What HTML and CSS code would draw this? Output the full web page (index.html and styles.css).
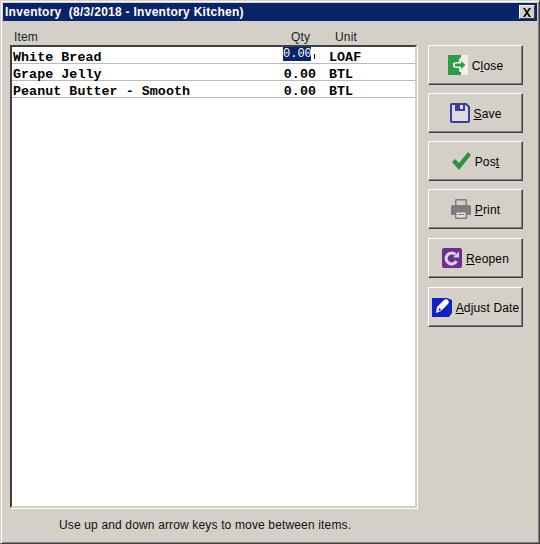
FILE: index.html
```html
<!DOCTYPE html>
<html>
<head>
<meta charset="utf-8">
<title>Inventory</title>
<link rel="stylesheet" href="styles.css">
</head>
<body>
<div class="window">
  <div class="titlebar">
    <span class="title">Inventory&nbsp; (8/3/2018 - Inventory Kitchen)</span>
    <span class="x_btn"><svg width="10" height="9" viewBox="0 0 10 9"><path d="M1 0h2l2 3 2-3h2L6 4.500 9 9H7L5 6 3 9H1l3-4.500z" fill="#000"/></svg></span>
  </div>
  <div class="content">
    <div class="left">
      <div class="heads">
        <span class="h_item">Item</span>
        <span class="h_qty">Qty</span>
        <span class="h_unit">Unit</span>
      </div>
      <div class="list">
        <div class="row">
          <span class="c_item">White Bread</span>
          <span class="c_qty"><span class="qty_sel">0.00</span><i class="tick"></i></span>
          <span class="c_unit">LOAF</span>
        </div>
        <div class="row">
          <span class="c_item">Grape Jelly</span>
          <span class="c_qty">0.00</span>
          <span class="c_unit">BTL</span>
        </div>
        <div class="row">
          <span class="c_item">Peanut Butter - Smooth</span>
          <span class="c_qty">0.00</span>
          <span class="c_unit">BTL</span>
        </div>
      </div>
      <div class="hint">Use up and down arrow keys to move between items.</div>
    </div>
    <div class="buttons">
      <div class="btn">
        <svg width="20" height="20" viewBox="0 0 20 20"><path d="M0 0h20v20H0z" fill="#eef0ea"/><path d="M0 0h13v3h-1v14h1v3H0z" fill="#2e9a48"/><path d="M5 8l3-1h3V3l9 7-9 7v-4H8l-3-1z" fill="#eef0ea"/><path d="M7 8.500h6V6l4.500 4-4.500 4v-2.500H7z" fill="#2e9a48"/></svg>
        <span>C<u>l</u>ose</span>
      </div>
      <div class="btn">
        <svg width="20" height="20" viewBox="0 0 20 20"><path d="M2 1h14l3 3v14a1 1 0 0 1-1 1H2a1 1 0 0 1-1-1V2a1 1 0 0 1 1-1z" fill="#dcdbe0" stroke="#3b3f99" stroke-width="2"/><path d="M5 1h10v7H5z" fill="#3b3f99"/><path d="M10 2h3v4h-3z" fill="#dcdbe0"/></svg>
        <span><u>S</u>ave</span>
      </div>
      <div class="btn">
        <svg width="19" height="18" viewBox="0 0 19 18"><path d="M0 10l3-3 4 4L16 0l3 3L7 18z" fill="#2b9148"/></svg>
        <span>Pos<u>t</u></span>
      </div>
      <div class="btn">
        <svg width="20" height="20" viewBox="0 0 20 20"><path d="M4 1a1 1 0 0 1 1-1h10a1 1 0 0 1 1 1v6H4z" fill="#7d7d7d"/><path d="M5.500 1.500h9V6h-9z" fill="#d4d0c8"/><path d="M2 6h16a2 2 0 0 1 2 2v7a1 1 0 0 1-1 1h-3v-3H4v3H1a1 1 0 0 1-1-1V8a2 2 0 0 1 2-2z" fill="#7d7d7d"/><path d="M4 12h12v8H4z" fill="#7d7d7d"/><path d="M5.500 13.500h9v5h-9z" fill="#e4e2dc"/><path d="M7 15h6v1H7z" fill="#7d7d7d"/></svg>
        <span><u>P</u>rint</span>
      </div>
      <div class="btn">
        <svg width="20" height="20" viewBox="0 0 20 20"><rect width="20" height="20" rx="2" fill="#6b2f8f"/><path d="M14.500 13A5.500 5.500 0 1 1 13.500 6.500" fill="none" stroke="#dcd4e4" stroke-width="3"/><path d="M11 9.500h6v-6z" fill="#dcd4e4"/></svg>
        <span><u>R</u>eopen</span>
      </div>
      <div class="btn">
        <svg width="20" height="20" viewBox="0 0 20 20"><path d="M1 1h14l5 2v13l-3 4H0V1z" fill="#1420c0"/><path d="M4 16l1-6 7-7c1-1 3-1 4 0s1 3 0 4l-7 7z" fill="#fff"/><path d="M6.500 14l.5-3 2.500 2z" fill="#1420c0"/></svg>
        <span><u>A</u>djust Date</span>
      </div>
    </div>
  </div>
</div>
</body>
</html>
```
FILE: styles.css
```css
html, body { margin: 0; padding: 0; }
body { width: 540px; height: 544px; background: #d4d0c8; font: 12px "Liberation Sans", Arial, sans-serif; color: #000; overflow: hidden; }

.window { width: 540px; height: 544px; box-sizing: border-box; padding: 2px; background: #d4d0c8; border: 1px solid; border-color: #d4d0c8 #404040 #404040 #d4d0c8; box-shadow: inset 1px 1px 0 #fff, inset -1px -1px 0 #808080; display: flex; flex-direction: column; }

.titlebar { height: 18px; background: #0a246a; display: flex; align-items: center; justify-content: space-between; padding: 0 2px; flex: none; }
.title { color: #fff; font-weight: bold; font-size: 12px; letter-spacing: 0.28px; }
.x_btn { width: 16px; height: 14px; box-sizing: border-box; background: #d4d0c8; border: 1px solid; border-color: #fff #404040 #404040 #fff; display: flex; align-items: center; justify-content: center; }
.x_btn svg { display: block; }

.content { display: flex; flex: 1; padding: 0 0 0 7px; letter-spacing: 0.15px; }
.left { width: 407px; display: flex; flex-direction: column; }

.heads { height: 24px; display: flex; align-items: flex-end; padding-bottom: 1px; box-sizing: border-box; color: #222; }
.h_item { width: 277px; padding-left: 4px; box-sizing: border-box; }
.h_qty { width: 46px; padding-left: 4px; box-sizing: border-box; }
.h_unit { width: 40px; padding-left: 2px; }

.list { height: 463px; box-sizing: border-box; background: #fff; border: 2px solid; border-color: #404040 #d4d0c8 #d4d0c8 #404040; box-shadow: 1px 1px 0 #fff; }
.row { height: 17px; box-sizing: border-box; border-bottom: 1px solid #bbb; display: flex; font: bold 13.33px/21px "Liberation Mono", "Courier New", monospace; letter-spacing: 0.05px; }
.c_item { width: 261px; padding-left: 1px; box-sizing: border-box; }
.c_qty { width: 56px; text-align: right; padding-right: 13px; box-sizing: border-box; position: relative; }
.c_unit { width: 80px; }

.qty_sel { position: absolute; left: 10px; top: 0; width: 28px; height: 14px; background: #0a246a; color: #fff; font: 12px/14px "Liberation Mono", monospace; letter-spacing: 0; text-align: center; }
.tick { position: absolute; left: 41px; top: 7px; width: 1px; height: 5px; background: #000; }

.hint { padding: 10px 0 0 49px; color: #111; }

.buttons { margin-left: 11px; width: 95px; padding-top: 24px; display: flex; flex-direction: column; }
.btn { width: 95px; height: 40px; box-sizing: border-box; margin-bottom: 8px; padding-top: 1px; border: 1px solid; border-color: #fff #404040 #404040 #fff; box-shadow: inset -1px -1px 0 #808080; display: flex; align-items: center; justify-content: center; gap: 4px; }
.btn:nth-child(n+4) { margin-bottom: 9px; }
.btn svg { flex: none; display: block; margin-top: -1px; }
```
